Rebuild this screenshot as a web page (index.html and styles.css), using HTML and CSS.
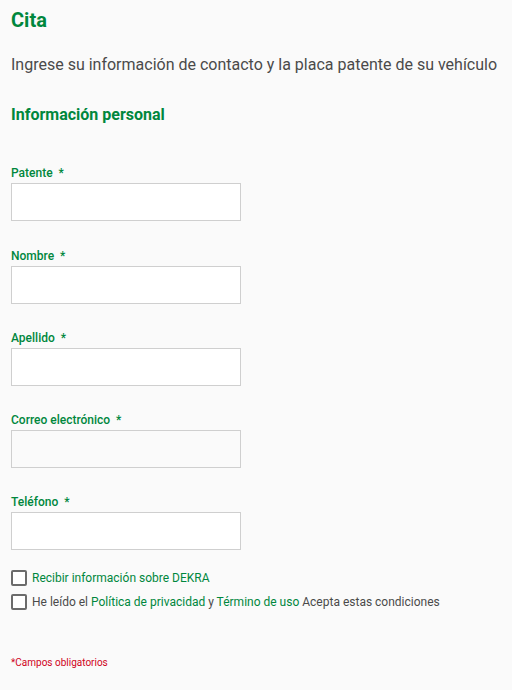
FILE: index.html
```html
<!DOCTYPE html>
<html lang="es">

<head>
    <meta charset="UTF-8">
    <meta name="viewport" content="width=device-width, initial-scale=1.0">
    <title>Cita</title>
    <link rel="stylesheet" href="styles.css">
</head>

<body>

    <!--* Appointment form -->
    <div class="page">
        <h1 class="title">Cita</h1>
        <p class="intro">Ingrese su información de contacto y la placa patente de su vehículo</p>

        <h2 class="section-title">Información personal</h2>

        <form class="form" id="citaForm">
            <div class="field">
                <label for="patente">Patente <span class="req">*</span></label>
                <input type="text" id="patente">
            </div>
            <div class="field">
                <label for="nombre">Nombre <span class="req">*</span></label>
                <input type="text" id="nombre">
            </div>
            <div class="field">
                <label for="apellido">Apellido <span class="req">*</span></label>
                <input type="text" id="apellido">
            </div>
            <div class="field">
                <label for="correo">Correo electrónico <span class="req">*</span></label>
                <input type="email" id="correo" class="input-muted">
            </div>
            <div class="field">
                <label for="telefono">Teléfono <span class="req">*</span></label>
                <input type="tel" id="telefono">
            </div>

            <div class="checks">
                <label class="check">
                    <span class="box"></span>
                    <span class="link">Recibir información sobre DEKRA</span>
                </label>
                <label class="check">
                    <span class="box"></span>
                    <span>He leído el <a href="#" class="link">Política de privacidad</a> y <a href="#"
                            class="link">Término de uso</a> Acepta estas condiciones</span>
                </label>
            </div>

            <div class="required-note">*Campos obligatorios</div>
        </form>
    </div>

</body>

</html>
```

FILE: styles.css
```css
body {
    margin: 0;
    padding: 8px 11px 0;
    background-color: #fafafa;
    font-family: Roboto, 'Liberation Sans', sans-serif;
    color: #4a4a4a;
}

.page {
    display: flex;
    flex-direction: column;
}

.title {
    margin: 0;
    font-size: 20px;
    line-height: 24px;
    font-weight: 700;
    color: #00873d;
}

.intro {
    margin: 21px 0 0;
    font-size: 16px;
    line-height: 24px;
    color: #4a4a4a;
}

.section-title {
    margin: 26px 0 0;
    font-size: 16px;
    line-height: 24px;
    font-weight: 700;
    color: #00873d;
}

.form {
    display: flex;
    flex-direction: column;
    margin-top: 38px;
}

.field {
    display: flex;
    flex-direction: column;
    gap: 2px;
    margin-bottom: 26px;
}

.field:first-child {
    margin-bottom: 27px;
}

.field label {
    font-size: 12px;
    line-height: 16px;
    font-weight: 500;
    color: #00873d;
}

.req {
    margin-left: 3px;
}

input {
    box-sizing: border-box;
    width: 230px;
    height: 38px;
    margin: 0;
    padding: 6px 10px;
    font-size: 14px;
    border: 1px solid #cfcfcf;
    border-radius: 0;
    background-color: #fff;
    outline: none;
}

input:focus {
    border-color: #00873d;
}

.input-muted {
    background-color: #fafafa;
}

.checks {
    display: flex;
    flex-direction: column;
    gap: 8px;
    margin-top: -6px;
}

.check {
    display: flex;
    align-items: center;
    gap: 5px;
    font-size: 12px;
    line-height: 16px;
    color: #4a4a4a;
    cursor: pointer;
}

.box {
    box-sizing: border-box;
    width: 16px;
    height: 16px;
    border: 2px solid #6b6b6b;
    border-radius: 2px;
    background-color: #fff;
    flex-shrink: 0;
}

.link {
    color: #00873d;
    text-decoration: none;
}

.required-note {
    margin-top: 46px;
    font-size: 10px;
    line-height: 14px;
    color: #d0021b;
}
```
